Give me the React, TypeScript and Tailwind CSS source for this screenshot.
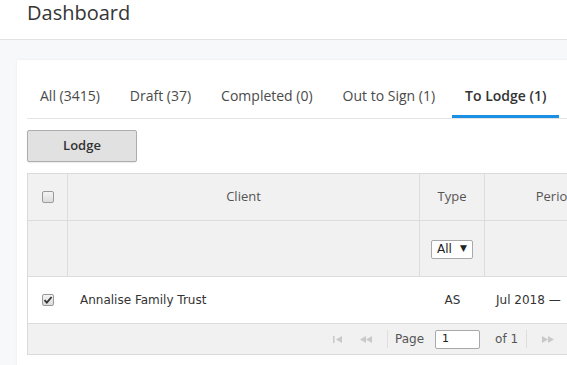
import React from 'react';

const tabs = [
  { label: 'All (3415)', active: false },
  { label: 'Draft (37)', active: false },
  { label: 'Completed (0)', active: false },
  { label: 'Out to Sign (1)', active: false },
  { label: 'To Lodge (1)', active: true },
];

function Checkbox({ checked }: { checked?: boolean }) {
  return (
    <span className="inline-flex h-[12px] w-[12px] items-center justify-center rounded-[2px] border border-[#9a9a9a] bg-gradient-to-b from-[#f4f4f4] to-[#dcdcdc]">
      {checked && (
        <svg width="10" height="10" viewBox="0 0 10 10">
          <path d="M1.5 5.2 L3.8 7.6 L8.6 2" fill="none" stroke="#333" strokeWidth="1.8" />
        </svg>
      )}
    </span>
  );
}

function PagerIcon({ kind }: { kind: 'first' | 'prev' | 'next' }) {
  if (kind === 'first') {
    return (
      <svg width="10" height="7" viewBox="0 0 10 7">
        <rect x="0" y="0" width="1.5" height="7" fill="#c9c9c9" />
        <path d="M9 0 L3 3.5 L9 7 Z" fill="#c9c9c9" />
      </svg>
    );
  }
  if (kind === 'prev') {
    return (
      <svg width="12" height="7" viewBox="0 0 12 7">
        <path d="M6 0 L0 3.5 L6 7 Z M12 0 L6 3.5 L12 7 Z" fill="#c9c9c9" />
      </svg>
    );
  }
  return (
    <svg width="12" height="7" viewBox="0 0 12 7">
      <path d="M0 0 L6 3.5 L0 7 Z M6 0 L12 3.5 L6 7 Z" fill="#c9c9c9" />
    </svg>
  );
}

export default function App() {
  return (
    <div className="h-[365px] w-[567px] overflow-hidden bg-[#f7f8fa] font-['Open_Sans',sans-serif]">
      <header className="h-[40px] border-b border-[#e2e2e2] bg-white pl-[27px]">
        <h1 className="text-[20px] leading-[25px] text-[#353535]">Dashboard</h1>
      </header>

      <div className="ml-[17px] mt-[20px] w-[640px] bg-white pb-[20px] pl-[10px] pt-[15px] shadow-[0_0_3px_rgba(0,0,0,0.06)]">
        <nav className="flex gap-[4px] border-b border-[#e4e4e4]">
          {tabs.map((t) => (
            <div
              key={t.label}
              className={
                t.active
                  ? 'flex h-[43px] items-center border-b-[3px] border-[#1a8fe3] px-[13px] text-[14px] font-semibold text-[#333]'
                  : 'flex h-[43px] items-center border-b-[3px] border-transparent px-[13px] text-[14px] text-[#4a4a4a]'
              }
            >
              {t.label}
            </div>
          ))}
        </nav>

        <button className="mt-[11px] flex h-[32px] w-[110px] items-center justify-center rounded-[2px] border border-[#adadad] bg-[#e1e1e1] text-[13px] font-semibold text-[#333] shadow-[0_1px_1px_rgba(0,0,0,0.08)]">
          Lodge
        </button>

        <div className="mt-[11px] w-[620px] border border-[#dadada] text-[12px] text-[#333]">
          {/* header row */}
          <div className="flex h-[46px] bg-[#f1f1f1] text-[#555]">
            <div className="flex w-[40px] items-center justify-center border-r border-[#dcdcdc]">
              <Checkbox />
            </div>
            <div className="flex w-[352px] items-center justify-center border-r border-[#dcdcdc] text-[13px]">Client</div>
            <div className="flex w-[65px] items-center justify-center border-r border-[#dcdcdc] text-[13px]">Type</div>
            <div className="flex w-[142px] items-center justify-center border-r border-[#dcdcdc] text-[13px]">Period</div>
          </div>
          {/* filter row */}
          <div className="flex h-[56px] border-t border-[#dcdcdc] bg-[#f1f1f1]">
            <div className="w-[40px] border-r border-[#dcdcdc]" />
            <div className="w-[352px] border-r border-[#dcdcdc]" />
            <div className="flex w-[65px] items-center justify-center border-r border-[#dcdcdc] pt-[1px]">
              <div className="flex h-[19px] w-[42px] items-center justify-between rounded-[2px] border border-[#a9a9a9] bg-white pl-[5px] pr-[5px] font-['DejaVu_Sans',sans-serif] text-[12px] text-[#222]">
                <span>All</span>
                <span className="text-[9px]">▼</span>
              </div>
            </div>
            <div className="w-[142px] border-r border-[#dcdcdc]" />
          </div>
          {/* data row */}
          <div className="flex h-[47px] items-center border-t border-[#dcdcdc] bg-white font-['DejaVu_Sans',sans-serif] text-[12px] text-[#333]">
            <div className="flex w-[40px] justify-center">
              <Checkbox checked />
            </div>
            <div className="w-[352px] pl-[12px]">Annalise Family Trust</div>
            <div className="w-[65px] text-center">AS</div>
            <div className="w-[142px] whitespace-nowrap pl-[11px]">Jul 2018 —&nbsp;&nbsp;&nbsp;Jun 2019</div>
          </div>
          {/* pager */}
          <div className="flex h-[31px] items-center border-t border-[#dcdcdc] bg-[#f1f1f1] pl-[305px] font-['DejaVu_Sans',sans-serif] text-[12px] text-[#555]">
            <span className="flex"><PagerIcon kind="first" /></span>
            <span className="ml-[17px] flex"><PagerIcon kind="prev" /></span>
            <span className="ml-[15px] h-[18px] w-px bg-[#dedede]" />
            <span className="ml-[7px]">Page</span>
            <span className="ml-[11px] flex h-[19px] w-[45px] items-center rounded-[2px] border border-[#a9a9a9] bg-white pl-[6px] text-[11px] text-[#222]">1</span>
            <span className="ml-[15px]">of 1</span>
            <span className="ml-[8px] h-[18px] w-px bg-[#dedede]" />
            <span className="ml-[15px] flex"><PagerIcon kind="next" /></span>
          </div>
        </div>
      </div>
    </div>
  );
}
